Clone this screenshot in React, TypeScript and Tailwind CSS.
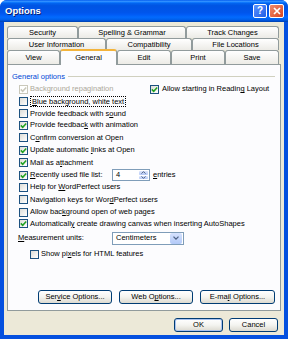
import React from "react"

function Check({ checked, disabled }: { checked?: boolean; disabled?: boolean }) {
  return (
    <span
      className={`flex h-[9px] w-[9px] shrink-0 items-center justify-center border ${
        disabled ? "border-[#cac8bb] bg-white" : "border-[#1c5180] bg-gradient-to-br from-[#dcdcd7] to-white"
      }`}
    >
      {checked && (
        <svg width="7" height="7" viewBox="0 0 7 7">
          <path d="M0.8 3.4 L2.7 5.3 L6.2 1.4" stroke={disabled ? "#cac8bb" : "#21a121"} strokeWidth="1.5" fill="none" />
        </svg>
      )}
    </span>
  )
}

function U({ children }: { children: React.ReactNode }) {
  return <span className="underline underline-offset-1">{children}</span>
}

function Tab({ label, w, selected }: { label: string; w: string; selected?: boolean }) {
  if (selected) {
    return (
      <div className={`${w} relative z-10 -mb-px flex h-[16px] items-center justify-center rounded-t-[3px] border-x border-t-2 border-x-[#919b9c] border-t-[#f3b43c] bg-[#fcfcfe]`}>
        {label}
      </div>
    )
  }
  return (
    <div className={`${w} flex h-full items-center justify-center rounded-t-[3px] border border-b-0 border-[#919b9c] bg-gradient-to-b from-white to-[#ecebe6]`}>
      {label}
    </div>
  )
}

function XpButton({ children, w, def }: { children: React.ReactNode; w: string; def?: boolean }) {
  return (
    <div
      className={`${w} flex h-[14px] items-center justify-center rounded-[3px] border border-[#003c74] bg-gradient-to-b from-white via-[#f4f4f0] to-[#dcdad0] ${
        def ? "shadow-[inset_0_0_0_1px_#a9c3f0]" : ""
      }`}
    >
      {children}
    </div>
  )
}

const rows: { h: string; checked?: boolean; label: React.ReactNode }[] = [
  { h: "h-[13px]", label: <span className="border border-dotted border-black px-px"><U>B</U>lue background, white text</span> },
  { h: "h-[11px]", label: <>Provide feedback with s<U>o</U>und</> },
  { h: "h-[12px]", checked: true, label: <>Provide feedbac<U>k</U> with animation</> },
  { h: "h-[13px]", label: <>C<U>o</U>nfirm conversion at Open</> },
  { h: "h-[12px]", checked: true, label: <>Update automatic <U>l</U>inks at Open</> },
  { h: "h-[13px]", checked: true, label: <>Mail as a<U>t</U>tachment</> },
]

const rows2: { h: string; checked?: boolean; label: React.ReactNode }[] = [
  { h: "h-[12px]", label: <>Help for <U>W</U>ordPerfect users</> },
  { h: "h-[13px]", label: <>Navigation keys for Wor<U>d</U>Perfect users</> },
  { h: "h-[12px]", label: <>Allow bac<U>k</U>ground open of web pages</> },
  { h: "h-[11px]", checked: true, label: <>Automaticall<U>y</U> create drawing canvas when inserting AutoShapes</> },
]

export default function App() {
  return (
    <div className="flex h-[339px] w-[288px] flex-col overflow-hidden rounded-t-[7px] bg-[#0450df] font-['Liberation_Sans',Arial,sans-serif] text-[7.5px] leading-none text-black">
      {/* title bar */}
      <div className="flex h-[22px] shrink-0 items-center bg-[linear-gradient(to_bottom,#0058ee_0%,#3593ff_6%,#127dff_10%,#0262ee_16%,#0054e3_26%,#0055eb_56%,#005bf5_66%,#026afe_78%,#0062ef_88%,#0052d6_94%,#0040ab_100%)] pl-[5px] pr-[4px]">
        <span className="text-[9.5px] font-bold text-white [text-shadow:1px_1px_0_#0a1e6e]">Options</span>
        <div className="ml-auto flex gap-[2px]">
          <div className="flex h-[14px] w-[14px] items-center justify-center rounded-[2px] border border-white bg-gradient-to-br from-[#5b93ff] to-[#1e5ce6] text-[10px] font-bold text-white">?</div>
          <div className="flex h-[14px] w-[15px] items-center justify-center rounded-[2px] border border-white bg-gradient-to-br from-[#f08a6c] to-[#d6441c]">
            <svg width="8" height="8" viewBox="0 0 8 8">
              <path d="M1 1 L7 7 M7 1 L1 7" stroke="white" strokeWidth="1.7" />
            </svg>
          </div>
        </div>
      </div>

      {/* body */}
      <div className="mx-[4px] mb-[4px] flex h-[313px] flex-col bg-[#ece9d8] px-[3px] pt-[4px] pb-[3px]">
        {/* tabs */}
        <div className="flex h-[38px] w-[272px] flex-col">
          <div className="flex h-[12px]">
            <Tab w="w-[71px]" label="Security" />
            <Tab w="w-[108px]" label="Spelling & Grammar" />
            <Tab w="w-[93px]" label="Track Changes" />
          </div>
          <div className="flex h-[12px]">
            <Tab w="w-[99px]" label="User Information" />
            <Tab w="w-[86px]" label="Compatibility" />
            <Tab w="w-[87px]" label="File Locations" />
          </div>
          <div className="flex h-[14px] items-end">
            <Tab w="w-[53px]" label="View" />
            <Tab w="w-[57px]" label="General" selected />
            <Tab w="w-[54px]" label="Edit" />
            <Tab w="w-[54px]" label="Print" />
            <Tab w="w-[54px]" label="Save" />
          </div>
        </div>

        {/* panel */}
        <div className="flex h-[247px] flex-col border border-[#919b9c] bg-[#fcfcfe] pt-[5px]">
          <div className="flex h-[13px] items-center pl-[4px] pr-[5px]">
            <span className="text-[#0046d5]">General options</span>
            <div className="ml-[3px] h-px flex-1 bg-[#d0d0bf]" />
          </div>

          <div className="flex h-[12px] items-center pl-[11px]">
            <div className="flex w-[131px] items-center gap-[2px]">
              <Check checked disabled />
              <span className="text-[#aca899]">Background repagination</span>
            </div>
            <div className="flex items-center gap-[3px]">
              <Check checked />
              <span>Allow starting in Readin<U>g</U> Layout</span>
            </div>
          </div>

          {rows.map((r, i) => (
            <div key={i} className={`flex ${r.h} items-center gap-[2px] pl-[11px]`}>
              <Check checked={r.checked} />
              <span className="whitespace-nowrap">{r.label}</span>
            </div>
          ))}

          <div className="flex h-[12px] items-center pl-[11px]">
            <Check checked />
            <span className="ml-[2px] w-[82px]"><U>R</U>ecently used file list:</span>
            <div className="flex h-[12px] w-[38px] items-center border border-[#7f9db9] bg-white">
              <span className="pl-[3px]">4</span>
              <div className="ml-auto flex h-full w-[11px] flex-col gap-px p-px">
                <div className="flex flex-1 items-center justify-center rounded-[1px] bg-gradient-to-b from-[#dce6fc] to-[#b4c8f6]">
                  <svg width="5" height="3" viewBox="0 0 5 3"><path d="M0.5 2.6 L2.5 0.6 L4.5 2.6" stroke="#4d6185" strokeWidth="1" fill="none" /></svg>
                </div>
                <div className="flex flex-1 items-center justify-center rounded-[1px] bg-gradient-to-b from-[#dce6fc] to-[#b4c8f6]">
                  <svg width="5" height="3" viewBox="0 0 5 3"><path d="M0.5 0.4 L2.5 2.4 L4.5 0.4" stroke="#4d6185" strokeWidth="1" fill="none" /></svg>
                </div>
              </div>
            </div>
            <span className="ml-[3px]"><U>e</U>ntries</span>
          </div>

          {rows2.map((r, i) => (
            <div key={i} className={`flex ${r.h} items-center gap-[2px] pl-[11px]`}>
              <Check checked={r.checked} />
              <span className="whitespace-nowrap">{r.label}</span>
            </div>
          ))}

          <div className="flex h-[18px] items-center pl-[10px]">
            <span className="w-[94px]"><U>M</U>easurement units:</span>
            <div className="flex h-[13px] w-[72px] items-center border border-[#7f9db9] bg-white">
              <span className="pl-[3px]">Centimeters</span>
              <div className="ml-auto mr-px flex h-[11px] w-[12px] items-center justify-center rounded-[2px] bg-gradient-to-b from-[#d6e2fd] to-[#b2c9f8]">
                <svg width="6" height="4" viewBox="0 0 6 4"><path d="M0.5 0.6 L3 3.1 L5.5 0.6" stroke="#4d6185" strokeWidth="1.3" fill="none" /></svg>
              </div>
            </div>
          </div>

          <div className="flex h-[14px] items-center gap-[2px] pl-[22px]">
            <Check />
            <span>Show pi<U>x</U>els for HTML features</span>
          </div>

          <div className="mt-auto flex justify-end gap-[7px] pr-[5px] pb-[6px]">
            <XpButton w="w-[74px]">Ser<U>v</U>ice Options...</XpButton>
            <XpButton w="w-[74px]">Web O<U>p</U>tions...</XpButton>
            <XpButton w="w-[75px]">E-ma<U>i</U>l Options...</XpButton>
          </div>
        </div>

        <div className="mt-[7px] flex justify-end gap-[6px] pr-[3px]">
          <XpButton w="w-[49px]" def>OK</XpButton>
          <XpButton w="w-[49px]">Cancel</XpButton>
        </div>
      </div>
    </div>
  )
}
